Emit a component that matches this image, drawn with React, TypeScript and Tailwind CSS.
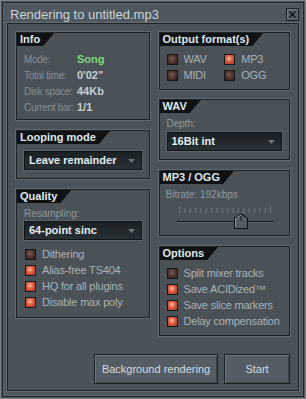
import React from 'react'

const font = { fontFamily: '"Liberation Sans", Arial, sans-serif' }

function Tab({ title }: { title: string }) {
  return (
    <div className="flex h-[13px] w-fit items-center whitespace-nowrap bg-[#0f1214] pl-[3px] pr-[14px] text-[11px] font-bold leading-none text-[#dfe9ef] [clip-path:polygon(0_0,100%_0,calc(100%-11px)_100%,0_100%)]">
      {title}
    </div>
  )
}

function Group({ title, className, children }: { title: string; className: string; children?: React.ReactNode }) {
  return (
    <div className={`border border-[#1d2326] bg-[#4a5258] shadow-[0_0_0_1px_#60696f] ${className}`}>
      <Tab title={title} />
      {children}
    </div>
  )
}

function Check({ on, label }: { on?: boolean; label: string }) {
  return (
    <div className="flex h-[16px] items-center gap-[6px] whitespace-nowrap">
      <span
        className={`h-[11px] w-[11px] shrink-0 border border-[#15191b] ${
          on
            ? 'bg-[radial-gradient(circle_at_45%_40%,#f8d0b4_0%,#e46a4a_35%,#bc3e2a_80%)]'
            : 'bg-[radial-gradient(circle_at_45%_40%,#7a5a56_0%,#4e3431_50%,#33211f_90%)]'
        }`}
      />
      <span className="text-[11px] tracking-[-0.2px] text-[#a8b1b7]">{label}</span>
    </div>
  )
}

function Dropdown({ value }: { value: string }) {
  return (
    <div className="flex h-[19px] items-center justify-between border border-[#111517] bg-gradient-to-b from-[#1a2023] to-[#293035] pl-[4px] pr-[6px] shadow-[0_0_0_1px_#5a6369]">
      <span className="text-[11px] font-bold text-[#e4ecf0]">{value}</span>
      <svg width="7" height="4" viewBox="0 0 7 4">
        <path d="M0 0 H7 L3.5 4 Z" fill="#6c767c" />
      </svg>
    </div>
  )
}

function Row({ label, value, green }: { label: string; value: string; green?: boolean }) {
  return (
    <div className="flex h-[16px] items-center whitespace-nowrap">
      <span className="w-[53px] shrink-0 text-[10px] tracking-[-0.3px] text-[#858e94]">{label}</span>
      <span className={`text-[11px] font-bold ${green ? 'text-[#7fd87a]' : 'text-[#c6ced3]'}`}>{value}</span>
    </div>
  )
}

function Btn({ label, className }: { label: string; className: string }) {
  return (
    <div
      className={`flex h-[30px] items-center justify-center whitespace-nowrap border border-[#1b2023] bg-[#545d63] text-[11px] text-[#d3dbe0] shadow-[inset_1px_1px_0_#6d767c,inset_-1px_-1px_0_#41494e] ${className}`}
    >
      {label}
    </div>
  )
}

export default function App() {
  return (
    <div style={font} className="h-[399px] w-[306px] border border-[#7a8388] bg-[#4f585e] p-[1px]">
      <div className="flex h-full flex-col border border-[#1e2427] shadow-[inset_0_0_0_1px_#5d666c]">
        {/* Title bar */}
        <div className="flex h-[20px] items-center justify-between pl-[7px] pr-[4px] pt-[3px]">
          <span className="text-[13px] text-[#c9d2d8]">Rendering to untitled.mp3</span>
          <div className="flex h-[13px] w-[13px] items-center justify-center border border-[#1a1f22] bg-[#5a6369] shadow-[inset_1px_1px_0_#737c82]">
            <svg width="7" height="7" viewBox="0 0 7 7">
              <path d="M0.5 0.5 L6.5 6.5 M6.5 0.5 L0.5 6.5" stroke="#0e1113" strokeWidth="1.4" />
            </svg>
          </div>
        </div>

        {/* Body */}
        <div className="mx-[4px] mb-[5px] flex flex-1 flex-col border border-[#1e2427] bg-[#4b535a] px-[8px] pt-[8px] shadow-[0_0_0_1px_#646d73]">
          <div className="flex gap-[9px]">
            {/* Left column */}
            <div className="flex w-[134px] flex-col gap-[10px]">
              <Group title="Info" className="h-[88px]">
                <div className="px-[7px] pt-[5px]">
                  <Row label="Mode:" value="Song" green />
                  <Row label="Total time:" value={'0\'02"'} />
                  <Row label="Disk space:" value="44Kb" />
                  <Row label="Current bar:" value="1/1" />
                </div>
              </Group>
              <Group title="Looping mode" className="h-[49px]">
                <div className="px-[7px] pt-[7px]">
                  <Dropdown value="Leave remainder" />
                </div>
              </Group>
              <Group title="Quality" className="h-[129px]">
                <div className="px-[7px]">
                  <div className="flex h-[17px] items-center pt-[3px] text-[10px] text-[#8f989e]">Resampling:</div>
                  <div className="pt-[1px]">
                    <Dropdown value="64-point sinc" />
                  </div>
                  <div className="pt-[6px] pl-[1px]">
                    <Check label="Dithering" />
                    <Check on label="Alias-free TS404" />
                    <Check on label="HQ for all plugins" />
                    <Check on label="Disable max poly" />
                  </div>
                </div>
              </Group>
            </div>

            {/* Right column */}
            <div className="flex w-[132px] flex-col gap-[9px]">
              <Group title="Output format(s)" className="h-[58px]">
                <div className="grid grid-cols-2 px-[7px] pt-[5px]">
                  <Check label="WAV" />
                  <Check on label="MP3" />
                  <Check label="MIDI" />
                  <Check label="OGG" />
                </div>
              </Group>
              <Group title="WAV" className="h-[61px]">
                <div className="px-[7px]">
                  <div className="flex h-[17px] items-center pt-[3px] text-[10px] text-[#8f989e]">Depth:</div>
                  <div className="pt-[2px]">
                    <Dropdown value="16Bit int" />
                  </div>
                </div>
              </Group>
              <div className="mt-[1px]">
                <Group title="MP3 / OGG" className="h-[66px]">
                  <div className="px-[6px]">
                    <div className="flex h-[17px] items-center pt-[3px] text-[10px] text-[#8f989e]">Bitrate: 192kbps</div>
                    <div className="relative h-[34px]">
                      <svg width="118" height="30" viewBox="0 0 118 30" className="absolute left-0 top-0">
                        {Array.from({ length: 18 }).map((_, i) => (
                          <line
                            key={i}
                            x1={13.5 + i * 5.35}
                            x2={13.5 + i * 5.35}
                            y1={i === 0 || i === 17 ? 5 : 7}
                            y2={12}
                            stroke="#70797f"
                            strokeWidth="1"
                          />
                        ))}
                        <line x1="11" x2="107" y1="20.5" y2="20.5" stroke="#15191b" strokeWidth="1" />
                        <line x1="11" x2="107" y1="21.5" y2="21.5" stroke="#5f686e" strokeWidth="1" />
                        <path d="M68.5 27.5 V17 L75 13 L81.5 17 V27.5 Z" fill="#535c62" stroke="#0f1214" />
                        <path d="M69.5 26.5 V17.5 L75 14" fill="none" stroke="#8a9399" />
                        <line x1="75" x2="75" y1="15" y2="20" stroke="#15191b" />
                      </svg>
                    </div>
                  </div>
                </Group>
              </div>
              <div className="mt-[1px]">
                <Group title="Options" className="h-[90px]">
                  <div className="px-[7px] pt-[5px]">
                    <Check label="Split mixer tracks" />
                    <Check on label="Save ACIDized™" />
                    <Check on label="Save slice markers" />
                    <Check on label="Delay compensation" />
                  </div>
                </Group>
              </div>
            </div>
          </div>

          {/* Buttons */}
          <div className="mt-auto mb-[6px] flex justify-end gap-[6px]">
            <Btn label="Background rendering" className="w-[124px]" />
            <Btn label="Start" className="w-[66px]" />
          </div>
        </div>
      </div>
    </div>
  )
}
